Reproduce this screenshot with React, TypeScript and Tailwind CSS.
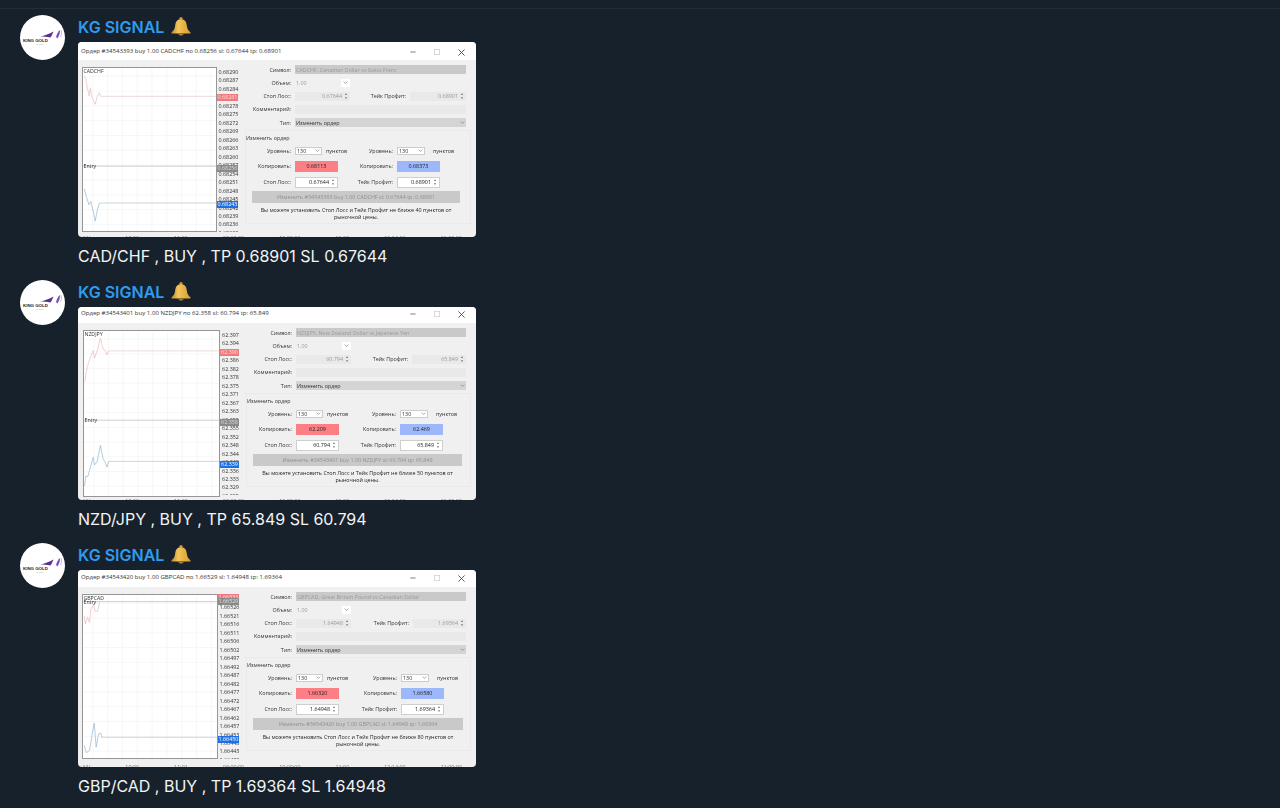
import { useId } from 'react';

type Badge = { text: string; top: string; color: string };

type Signal = {
  order: string;
  pair: string;
  openPrice: string;
  symbolName: string;
  sl: string;
  tp: string;
  copySl: string;
  copyTp: string;
  minPoints: string;
  caption: string;
  // per-screenshot sizes, these were cropped a little differently each time
  windowHeight: string;
  titleBar: string;
  chartPad: string;
  chartBox: string;
  scaleBox: string;
  secondCol: string;
  secondColTop: string;
  buttonEnd: string;
  tabsOffset: string;
  viewBox: string;
  red: string;
  blue: string;
  entry: string;
  entryLabel: string;
  prices: string[];
  badges: Badge[];
};

const signals: Signal[] = [
  {
    order: '34543393',
    pair: 'CADCHF',
    openPrice: '0.68256',
    symbolName: 'CADCHF, Canadian Dollar vs Swiss Franc',
    sl: '0.67644',
    tp: '0.68901',
    copySl: '0.68113',
    copyTp: '0.68373',
    minPoints: '40',
    caption: 'CAD/CHF , BUY , TP 0.68901 SL 0.67644',
    windowHeight: 'h-[195px]',
    titleBar: 'h-[18px] pt-[2px]',
    chartPad: 'pl-[4px]',
    chartBox: 'w-[135px] h-[165px]',
    scaleBox: 'w-[23px]',
    secondCol: 'w-[55px]',
    secondColTop: 'w-[52px]',
    buttonEnd: 'mr-[10px]',
    tabsOffset: 'mt-[3px]',
    viewBox: '18 80 405 495',
    red: '22,105 27,115 30,135 37,165 40,140 46,170 55,190 62,165 68,155 72,166',
    blue: '22,447 28,470 36,495 42,485 50,520 55,545 62,510 68,490',
    entry: '378',
    entryLabel: 'top-[95px]',
    prices: ['0.68290', '0.68287', '0.68284', '0.68281', '0.68278', '0.68275', '0.68272', '0.68269', '0.68266', '0.68263', '0.68260', '0.68257', '0.68254', '0.68251', '0.68248', '0.68245', '0.68242', '0.68239', '0.68236', '0.68233'],
    badges: [
      { text: '0.68281', top: 'top-[27px]', color: 'bg-[#f0797f] text-[#ffd9da]' },
      { text: '0.68256', top: 'top-[98px]', color: 'bg-[#8a8a8a] text-[#d8d8d8]' },
      { text: '0.68243', top: 'top-[134px]', color: 'bg-[#1f6fe0] text-white' },
    ],
  },
  {
    order: '34543401',
    pair: 'NZDJPY',
    openPrice: '62.358',
    symbolName: 'NZDJPY, New Zealand Dollar vs Japanese Yen',
    sl: '60.794',
    tp: '65.849',
    copySl: '62.209',
    copyTp: '62.469',
    minPoints: '50',
    caption: 'NZD/JPY , BUY , TP 65.849 SL 60.794',
    windowHeight: 'h-[193px]',
    titleBar: 'h-[16px] pb-[2px]',
    chartPad: 'pl-[5px]',
    chartBox: 'w-[137px] h-[167px]',
    scaleBox: 'w-[21px]',
    secondCol: 'w-[57px]',
    secondColTop: 'w-[53px]',
    buttonEnd: 'mr-[8px]',
    tabsOffset: 'mt-[1px]',
    viewBox: '20 75 412 505',
    red: '22,230 30,185 38,160 48,135 52,158 62,130 70,97 78,130 85,135 90,148 95,136',
    blue: '22,550 25,520 32,520 40,490 48,462 52,485 60,475 70,425 78,465 85,478 90,492 95,474',
    entry: '348',
    entryLabel: 'top-[86px]',
    prices: ['62.397', '62.394', '62.390', '62.386', '62.382', '62.378', '62.375', '62.371', '62.367', '62.363', '62.359', '62.355', '62.352', '62.348', '62.344', '62.340', '62.336', '62.333', '62.329', '62.325'],
    badges: [
      { text: '62.390', top: 'top-[19px]', color: 'bg-[#f0797f] text-[#ffd9da]' },
      { text: '62.358', top: 'top-[89px]', color: 'bg-[#8a8a8a] text-[#d8d8d8]' },
      { text: '62.339', top: 'top-[131px]', color: 'bg-[#1f6fe0] text-white' },
    ],
  },
  {
    order: '34543420',
    pair: 'GBPCAD',
    openPrice: '1.66529',
    symbolName: 'GBPCAD, Great Britain Pound vs Canadian Dollar',
    sl: '1.64948',
    tp: '1.69364',
    copySl: '1.66320',
    copyTp: '1.66580',
    minPoints: '80',
    caption: 'GBP/CAD , BUY , TP 1.69364 SL 1.64948',
    windowHeight: 'h-[197px]',
    titleBar: 'h-[17px] pb-[1px]',
    chartPad: 'pl-[4px]',
    chartBox: 'w-[136px] h-[165px]',
    scaleBox: 'w-[23px]',
    secondCol: 'w-[58px]',
    secondColTop: 'w-[54px]',
    buttonEnd: 'mr-[7px]',
    tabsOffset: 'mt-[5px]',
    viewBox: '18 72 407 496',
    red: '22,135 25,160 32,140 38,155 42,115 50,100 55,122 62,122 68,95 72,90',
    blue: '22,530 28,552 38,545 45,500 52,462 58,535 65,495 72,492 75,505',
    entry: '92',
    entryLabel: 'top-[4px]',
    prices: ['1.66530', '1.66526', '1.66521', '1.66516', '1.66511', '1.66506', '1.66502', '1.66497', '1.66492', '1.66487', '1.66482', '1.66477', '1.66472', '1.66467', '1.66462', '1.66457', '1.66453', '1.66448', '1.66443', '1.66438'],
    badges: [
      { text: '1.66533', top: 'top-[0px]', color: 'bg-[#f0797f] text-[#ffd9da]' },
      { text: '1.66529', top: 'top-[4px]', color: 'bg-[#8a8a8a] text-[#e0e0e0]' },
      { text: '1.66450', top: 'top-[142px]', color: 'bg-[#1f6fe0] text-white' },
    ],
  },
];

// bottom tab strip of the terminal, only the tops of the letters show in the crop
const cutOffTabs = ['NV', '19:00', '11:01', '08:00:00', '10:00:00', '11:00', '12:14:00', '11:00:00'];

function Avatar() {
  return (
    <svg viewBox="0 0 45 45" className="w-[45px] h-[45px] shrink-0">
      <circle cx="22.5" cy="22.5" r="22.5" fill="#ffffff" />
      <path d="M20 21.5 C25 20.5 29 19 33.5 16.5 C32.5 19 31.5 21 30.5 22.5 C27 21.5 24 21.5 20 21.5 Z" fill="#5b2f93" />
      <path d="M36 22 C37 19 38 16.5 40 15 C40 18.5 39 21 37.5 23.5 Z" fill="#7a4fb5" />
      <path d="M41 15 C42 18 41.5 20 40 22" fill="none" stroke="#b88fd8" strokeWidth="0.7" />
      <text x="3" y="26.5" fontSize="4.4" fontWeight="700" fontFamily="'Liberation Sans', sans-serif" fill="#222222">KING GOLD</text>
      <text x="16" y="30" fontSize="1.6" fontFamily="'Liberation Sans', sans-serif" fill="#a9a9a9">TRADING</text>
    </svg>
  );
}

function Bell() {
  const id = useId();
  return (
    <svg viewBox="1 0.8 18 17.4" preserveAspectRatio="none" className="w-[20px] h-[19px] ml-[7px] mt-[2px] shrink-0">
      <defs>
        <linearGradient id={id} x1="0" x2="1" y1="0" y2="0">
          <stop offset="0" stopColor="#b8862c" />
          <stop offset="0.35" stopColor="#f4c759" />
          <stop offset="1" stopColor="#d39a2f" />
        </linearGradient>
      </defs>
      <circle cx="10" cy="2.4" r="1.6" fill="#c8922f" />
      <path d="M10 2.8 C6 2.8 5 5.8 4.7 9 C4.4 12 3.2 13.2 1.6 14.8 C1 15.5 1.4 16 2.4 16 L17.6 16 C18.6 16 19 15.5 18.4 14.8 C16.8 13.2 15.6 12 15.3 9 C15 5.8 14 2.8 10 2.8 Z" fill={`url(#${id})`} />
      <path d="M7.6 16.4 C8 18.4 12 18.4 12.4 16.4 Z" fill="#a9762a" />
    </svg>
  );
}

function Spinner() {
  return (
    <span className="flex flex-col justify-center items-center w-[8px] h-full text-[3px] leading-[4px] text-[#555555]">
      <span>▲</span>
      <span>▼</span>
    </span>
  );
}

function Chevron() {
  return (
    <svg viewBox="0 0 8 8" className="w-[5px] h-[5px] shrink-0">
      <path d="M1 2.5 L4 5.5 L7 2.5" fill="none" stroke="#777777" strokeWidth="1" />
    </svg>
  );
}

function Chart({ s }: { s: Signal }) {
  const [vx, vy, vw, vh] = s.viewBox.split(' ').map(Number);
  const gridX = Array.from({ length: 10 }, (_, i) => vx + 30 + i * 45);
  const gridY = Array.from({ length: 11 }, (_, i) => vy + 25 + i * 45);
  const lastPoint = (points: string) => points.split(' ').pop()!.split(',').map(Number);
  const [redX, redY] = lastPoint(s.red);
  const [blueX, blueY] = lastPoint(s.blue);
  return (
    <div className={`relative shrink-0 mt-[7px] bg-white border-[1.5px] border-[#969696] ${s.chartBox}`}>
      <svg viewBox={s.viewBox} preserveAspectRatio="none" className="w-full h-full block">
        {gridX.map((x) => (
          <line key={x} x1={x} x2={x} y1={vy} y2={vy + vh} stroke="#eeeeee" strokeWidth="1.5" />
        ))}
        {gridY.map((y) => (
          <line key={y} x1={vx} x2={vx + vw} y1={y} y2={y} stroke="#eeeeee" strokeWidth="1.5" />
        ))}
        <line x1={vx} x2={vx + vw} y1={s.entry} y2={s.entry} stroke="#b5b5b5" strokeWidth="2" />
        {s.pair !== 'GBPCAD' && <line x1={redX} x2={vx + vw} y1={redY} y2={redY} stroke="#d4bcbc" strokeWidth="1.6" />}
        <line x1={blueX} x2={vx + vw} y1={blueY} y2={blueY} stroke="#9fb0bd" strokeWidth="1.6" />
        <polyline points={s.red} fill="none" stroke="#ecb4b6" strokeWidth="2" />
        <polyline points={s.blue} fill="none" stroke="#8fb2cc" strokeWidth="2" />
      </svg>
      <span className="absolute left-[0.5px] top-[-0.5px] text-[5.2px] leading-[7px] text-[#333333]">{s.pair}</span>
      <span className={`absolute left-[0.5px] text-[5.2px] leading-[7px] text-[#333333] ${s.entryLabel}`}>Entry</span>
    </div>
  );
}

function PriceScale({ s }: { s: Signal }) {
  return (
    <div className={`relative shrink-0 mt-[7px] h-[165px] ${s.scaleBox}`}>
      <div className="flex flex-col items-center h-full overflow-hidden pt-[1px] text-[5.4px] leading-[8.47px] text-[#333333]">
        {s.prices.map((p) => (
          <span key={p}>{p}</span>
        ))}
      </div>
      {s.badges.map((b) => (
        <span
          key={b.text}
          className={`absolute left-0 right-[2px] h-[7px] flex items-center justify-center text-[5.4px] ${b.top} ${b.color}`}
        >
          {b.text}
        </span>
      ))}
    </div>
  );
}

function Label({ children, width = 'w-[51px]' }: { children: string; width?: string }) {
  return <span className={`shrink-0 text-right ${width}`}>{children}</span>;
}

function OrderForm({ s }: { s: Signal }) {
  return (
    <div className="flex-1 min-w-0 flex flex-col pt-[3px] pr-[10px] text-[5.4px] text-[#333333] whitespace-nowrap">
      <div className="flex items-center gap-[4px] h-[13.3px]">
        <Label>Символ:</Label>
        <span className="flex-1 h-[9px] bg-[#c9c9c9] text-[#9a9a9a] flex items-center px-[1px]">{s.symbolName}</span>
      </div>
      <div className="flex items-center gap-[4px] h-[13.3px]">
        <Label>Объем:</Label>
        <span className="w-[55px] flex items-center justify-between text-[#9a9a9a] pl-[1px]">
          1.00
          <span className="w-[9px] h-[8px] bg-white flex items-center justify-center">
            <Chevron />
          </span>
        </span>
      </div>
      <div className="flex items-center gap-[4px] h-[13.3px]">
        <Label>Стоп Лосс:</Label>
        <span className="w-[55px] h-[9px] bg-[#e9e9e9] flex items-center justify-end text-[#9a9a9a]">
          {s.sl}
          <Spinner />
        </span>
        <Label width={s.secondColTop}>Тейк Профит:</Label>
        <span className="flex-1 h-[9px] bg-[#e9e9e9] flex items-center justify-end text-[#9a9a9a]">
          {s.tp}
          <Spinner />
        </span>
      </div>
      <div className="flex items-center gap-[4px] h-[13.3px]">
        <Label>Комментарий:</Label>
        <span className="flex-1 h-[9px] bg-[#e9e9e9]" />
      </div>
      <div className="flex items-center gap-[4px] h-[13.3px]">
        <Label>Тип:</Label>
        <span className="flex-1 h-[9px] bg-[#d4d4d4] flex items-center justify-between px-[1px]">
          Изменить ордер
          <Chevron />
        </span>
      </div>

      <div className="mt-[1px] -mr-[5px] ml-[5px] flex flex-col border border-[#eaeaea] pb-[2px]">
        <span className="h-[13px] flex items-center">Изменить ордер</span>
        <div className="flex items-center h-[13px] -ml-[6px]">
          <Label>Уровень:</Label>
          <span className="ml-[4px] w-[27px] h-[8px] bg-white border border-[#cccccc] flex items-center justify-between px-[1px]">
            130
            <Chevron />
          </span>
          <span className="ml-[4px] w-[12px]">пунктов</span>
          <Label width={s.secondCol}>Уровень:</Label>
          <span className="ml-[4px] w-[28px] h-[8px] bg-white border border-[#cccccc] flex items-center justify-between px-[1px]">
            130
            <Chevron />
          </span>
          <span className="ml-[8px]">пунктов</span>
        </div>
        <div className="flex items-center h-[16px] mt-[1px] -ml-[6px]">
          <Label>Копировать:</Label>
          <span className="ml-[4px] w-[43px] h-[11px] bg-[#fb7f85] text-[#222222] flex items-center justify-center">{s.copySl}</span>
          <Label width={s.secondCol}>Копировать:</Label>
          <span className="ml-[4px] w-[43px] h-[11px] bg-[#9cb8fa] text-[#222222] flex items-center justify-center">{s.copyTp}</span>
        </div>
        <div className="flex items-center h-[16px] -ml-[6px]">
          <Label>Стоп Лосс:</Label>
          <span className="ml-[4px] w-[43px] h-[11px] bg-white border border-[#cfcfcf] text-[#222222] flex items-center justify-end">
            {s.sl}
            <Spinner />
          </span>
          <Label width={s.secondCol}>Тейк Профит:</Label>
          <span className="ml-[4px] w-[43px] h-[11px] bg-white border border-[#cfcfcf] text-[#222222] flex items-center justify-end">
            {s.tp}
            <Spinner />
          </span>
        </div>
        <div className={`h-[12px] mt-[1px] ml-[6px] bg-[#c9c9c9] text-[#909090] flex items-center justify-center ${s.buttonEnd}`}>
          {`Изменить #${s.order} buy 1.00 ${s.pair} sl: ${s.sl} tp: ${s.tp}`}
        </div>
        <p className={`mt-[4px] ml-[6px] text-center leading-[7px] text-[#222222] whitespace-normal px-[8px] ${s.buttonEnd}`}>
          {`Вы можете установить Стоп Лосс и Тейк Профит не ближе ${s.minPoints} пунктов от рыночной цены.`}
        </p>
      </div>
    </div>
  );
}

function OrderWindow({ s }: { s: Signal }) {
  return (
    <div className={`w-[398px] rounded-[4px] overflow-hidden bg-[#f0f0f0] flex flex-col blur-[0.3px] font-['Open_Sans',sans-serif] ${s.windowHeight}`}>
      <div className={`shrink-0 bg-white flex items-center justify-between pl-[3px] pr-[11px] ${s.titleBar}`}>
        <span className="text-[6.07px] text-[#333333] whitespace-nowrap">
          {`Ордер #${s.order} buy 1.00 ${s.pair} по ${s.openPrice} sl: ${s.sl} tp: ${s.tp}`}
        </span>
        <span className="flex items-center gap-[18px] text-[#555555]">
          <svg viewBox="0 0 8 8" className="w-[6px] h-[6px]"><path d="M0.5 4 H7.5" stroke="#555555" /></svg>
          <svg viewBox="0 0 8 8" className="w-[6px] h-[6px]"><rect x="0.5" y="0.5" width="7" height="7" fill="none" stroke="#cfcfcf" /></svg>
          <svg viewBox="0 0 8 8" className="w-[7px] h-[7px]"><path d="M0.5 0.5 L7.5 7.5 M7.5 0.5 L0.5 7.5" stroke="#444444" /></svg>
        </span>
      </div>
      <div className={`flex shrink-0 ${s.chartPad}`}>
        <Chart s={s} />
        <PriceScale s={s} />
        <OrderForm s={s} />
      </div>
      <div className={`flex justify-between pl-[5px] pr-[14px] text-[5.4px] leading-[7px] text-[#777777] ${s.tabsOffset}`}>
        {cutOffTabs.map((t) => (
          <span key={t}>{t}</span>
        ))}
      </div>
    </div>
  );
}

export default function App() {
  return (
    <div className="w-[1280px] h-[808px] overflow-hidden bg-[#17212b] font-['Inter',sans-serif]">
      <div className="h-[9px] border-b border-[#212d39]" />
      <div className="flex flex-col pt-[6px]">
        {signals.map((s) => (
          <div key={s.order} className="flex gap-[13px] pl-[20px]">
            <Avatar />
            <div className="w-[398px] flex flex-col">
              <div className="h-[27px] flex items-start">
                <span className="text-[16px] leading-[24px] font-semibold text-[#2f9bef] whitespace-nowrap">KG SIGNAL</span>
                <Bell />
              </div>
              <OrderWindow s={s} />
              <p className="h-[43px] pt-[8px] text-[16px] leading-[22px] text-[#f2f4f6] whitespace-nowrap">{s.caption}</p>
            </div>
          </div>
        ))}
      </div>
    </div>
  );
}
